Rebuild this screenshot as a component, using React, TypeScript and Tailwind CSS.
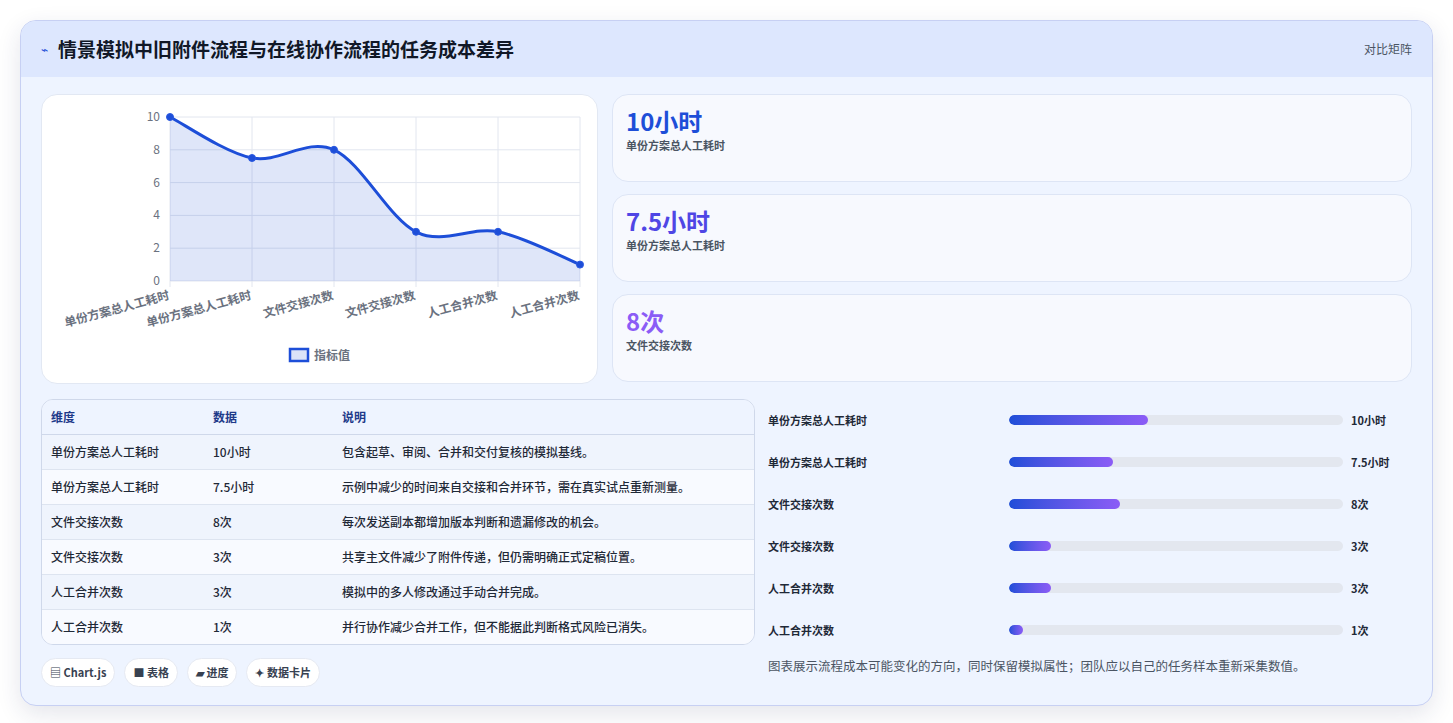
import React from "react";

const F = '"Noto Sans CJK SC", "Noto Sans", sans-serif';

const rows = [
  ["单份方案总人工耗时", "10小时", "包含起草、审阅、合并和交付复核的模拟基线。", 10],
  ["单份方案总人工耗时", "7.5小时", "示例中减少的时间来自交接和合并环节，需在真实试点重新测量。", 7.5],
  ["文件交接次数", "8次", "每次发送副本都增加版本判断和遗漏修改的机会。", 8],
  ["文件交接次数", "3次", "共享主文件减少了附件传递，但仍需明确正式定稿位置。", 3],
  ["人工合并次数", "3次", "模拟中的多人修改通过手动合并完成。", 3],
  ["人工合并次数", "1次", "并行协作减少合并工作，但不能据此判断格式风险已消失。", 1],
] as const;

function Chart() {
  const L = 128, T = 22, W = 410, H = 164;
  const vals = [10, 7.5, 8, 3, 3, 1];
  const pts = vals.map((v, i) => [L + i * (W / 5), T + H - (v / 10) * H]);
  // cardinal spline
  let d = `M${pts[0][0]},${pts[0][1]}`;
  for (let i = 0; i < pts.length - 1; i++) {
    const p0 = pts[Math.max(0, i - 1)], p1 = pts[i], p2 = pts[i + 1], p3 = pts[Math.min(pts.length - 1, i + 2)];
    const t = 0.4 / 1.2;
    const c1 = [p1[0] + (p2[0] - p0[0]) * t / 2, p1[1] + (p2[1] - p0[1]) * t / 2];
    const c2 = [p2[0] - (p3[0] - p1[0]) * t / 2, p2[1] - (p3[1] - p1[1]) * t / 2];
    d += ` C${c1[0]},${c1[1]} ${c2[0]},${c2[1]} ${p2[0]},${p2[1]}`;
  }
  const area = d + ` L${L + W},${T + H} L${L},${T + H} Z`;
  const labels = ["单份方案总人工耗时", "单份方案总人工耗时", "文件交接次数", "文件交接次数", "人工合并次数", "人工合并次数"];
  return (
    <svg width="557" height="290" style={{ fontFamily: F }}>
      {[0, 2, 4, 6, 8, 10].map((v) => {
        const y = T + H - (v / 10) * H;
        return (
          <g key={v}>
            <line x1={L} x2={L + W} y1={y} y2={y} stroke="#e2e6ef" />
            <text x={L - 10} y={y + 4} fontSize="12" fill="#6b7280" textAnchor="end">{v}</text>
          </g>
        );
      })}
      {pts.map((p, i) => (
        <line key={i} x1={p[0]} x2={p[0]} y1={T} y2={T + H + 6} stroke="#e2e6ef" />
      ))}
      <path d={area} fill="#1d4ed8" fillOpacity="0.14" />
      <path d={d} fill="none" stroke="#1d4ed8" strokeWidth="3" />
      {pts.map((p, i) => (
        <circle key={i} cx={p[0]} cy={p[1]} r="3.5" fill="#1d4ed8" stroke="#2b59e0" strokeWidth="1" />
      ))}
      {pts.map((p, i) => (
        <text key={i} x={p[0]} y={T + H + 18} fontSize="12" fontWeight="600" fill="#6b7280" textAnchor="end" transform={`rotate(-15 ${p[0]} ${T + H + 18})`}>
          {labels[i]}
        </text>
      ))}
      <rect x="248" y="254" width="18" height="12" fill="#dbe3f8" stroke="#1d4ed8" strokeWidth="2.5" />
      <text x="272" y="265" fontSize="12" fill="#6b7280" fontWeight="600">指标值</text>
    </svg>
  );
}

export default function App() {
  return (
    <div className="min-h-[723px] bg-white p-5" style={{ fontFamily: F }}>
      <div className="overflow-hidden rounded-2xl border border-[#c7d0f3] bg-[#eef4ff] shadow-[0_8px_24px_rgba(30,40,90,0.12)]">
        <div className="flex h-[56px] items-center justify-between bg-[#dde7fe] px-5">
          <div className="flex items-center gap-2.5">
            <span className="text-[12px] text-[#1d4ed8]">⌁</span>
            <h1 className="text-[19px] font-bold text-[#111827]">情景模拟中旧附件流程与在线协作流程的任务成本差异</h1>
          </div>
          <span className="text-[12px] text-[#4b5563]">对比矩阵</span>
        </div>
        <div className="px-5 pt-[17px] pb-[18px]">
          <div className="flex gap-[14px]">
            <div className="h-[290px] w-[557px] overflow-hidden rounded-2xl border border-[#e2e8f3] bg-white">
              <Chart />
            </div>
            <div className="flex flex-1 flex-col gap-[12px]">
              {[
                ["10小时", "单份方案总人工耗时", "text-[#1d4ed8]"],
                ["7.5小时", "单份方案总人工耗时", "text-[#4f46e5]"],
                ["8次", "文件交接次数", "text-[#8b5cf6]"],
              ].map(([v, l, c], i) => (
                <div key={i} className="h-[88px] rounded-2xl border border-[#dde5f5] bg-[#f7f9fe] px-[13px] pt-[10px]">
                  <div className={`text-[24px] font-bold leading-[32px] ${c}`}>{v}</div>
                  <div className="text-[11px] font-semibold text-[#4b5563]">{l}</div>
                </div>
              ))}
            </div>
          </div>
          <div className="mt-[15px] flex gap-[13px]">
            <div className="w-[714px]">
              <div className="overflow-hidden rounded-xl border border-[#cfd8ea] bg-[#f8faff]">
                <table className="w-full text-left text-[12px]">
                  <thead>
                    <tr className="h-[34px] border-b border-[#cfd8ea] bg-[#eef4ff] text-[#1e3a8a]">
                      <th className="w-[171px] pl-[9px] font-semibold">维度</th>
                      <th className="w-[129px] font-semibold">数据</th>
                      <th className="font-semibold">说明</th>
                    </tr>
                  </thead>
                  <tbody>
                    {rows.map((r, i) => (
                      <tr key={i} className={`h-[35px] text-[#1f2937] ${i < 5 ? "border-b border-[#dde4f0]" : ""} ${i % 2 === 0 ? "bg-[#eff4fd]" : "bg-[#f8faff]"}`}>
                        <td className="pl-[9px] font-medium">{r[0]}</td>
                        <td className="font-medium">{r[1]}</td>
                        <td className="font-medium">{r[2]}</td>
                      </tr>
                    ))}
                  </tbody>
                </table>
              </div>
              <div className="mt-[13px] flex gap-[9px] text-[11px] font-semibold text-[#374151]">
                {["▤ Chart.js", "■ 表格", "▰ 进度", "✦ 数据卡片"].map((t) => (
                  <span key={t} className="flex h-[29px] items-center rounded-full border border-[#e5e9f2] bg-white px-[8px]">{t}</span>
                ))}
              </div>
            </div>
            <div className="flex-1 pl-[0px]">
              {rows.map((r, i) => (
                <div key={i} className="flex h-[42px] items-center text-[11px] font-semibold text-[#1f2937]">
                  <span className="w-[241px]">{r[0]}</span>
                  <div className="h-[10px] w-[334px] overflow-hidden rounded-full bg-[#e3e7ef]">
                    <div className="h-full rounded-full bg-gradient-to-r from-[#1d4ed8] to-[#8b5cf6]" style={{ width: `${(r[3] / 24) * 100}%` }} />
                  </div>
                  <span className="ml-[8px]">{r[1]}</span>
                </div>
              ))}
              <p className="mt-[6px] text-[12.5px] text-[#4b5563]">图表展示流程成本可能变化的方向，同时保留模拟属性；团队应以自己的任务样本重新采集数值。</p>
            </div>
          </div>
        </div>
      </div>
    </div>
  );
}
